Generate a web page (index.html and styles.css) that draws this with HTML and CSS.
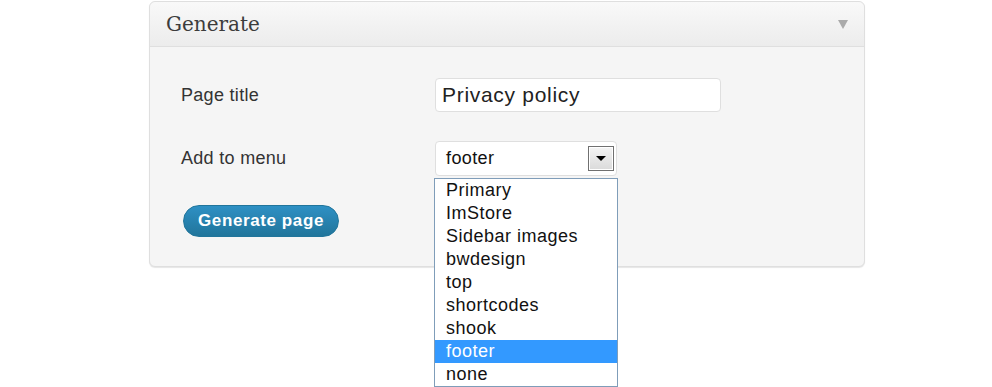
FILE: index.html
```html
<!DOCTYPE html>
<html lang="en">
<head>
  <meta charset="UTF-8" />
  <title>Generate page</title>
  <link rel="stylesheet" href="styles.css">
</head>
<body>

  <div class="postbox">
    <div class="postbox-head">
      <h3>Generate</h3>
      <span class="toggle"></span>
    </div>

    <div class="postbox-body">
      <div class="row">
        <label class="label">Page title</label>
        <div class="field text-field">Privacy policy</div>
      </div>

      <div class="row">
        <label class="label">Add to menu</label>
        <div class="select-wrap">
          <div class="field select-field">
            <span>footer</span>
            <span class="select-btn"><span class="caret"></span></span>
          </div>
          <!-- open option list -->
          <ul class="options">
            <li>Primary</li>
            <li>ImStore</li>
            <li>Sidebar images</li>
            <li>bwdesign</li>
            <li>top</li>
            <li>shortcodes</li>
            <li>shook</li>
            <li class="selected">footer</li>
            <li>none</li>
          </ul>
        </div>
      </div>

      <div class="row">
        <button class="button-primary">Generate page</button>
      </div>
    </div>
  </div>

</body>
</html>
```

FILE: styles.css
```css
html, body {
  min-height: 387px;
}
body {
  margin: 0;
  background: #fff;
  font-family: "Liberation Sans", Arial, sans-serif;
  color: #333;
}
.postbox {
  width: 714px;
  margin: 1px 0 0 149px;
  background: #f5f5f5;
  border: 1px solid #dfdfdf;
  border-radius: 6px;
  box-shadow: 0 1px 1px #e6e6e6;
}
.postbox-head {
  height: 44px;
  display: flex;
  align-items: center;
  justify-content: space-between;
  padding: 0 16px 0 16px;
  background: linear-gradient(#f9f9f9, #ececec);
  border-bottom: 1px solid #dfdfdf;
  border-radius: 6px 6px 0 0;
}
.postbox-head h3 {
  margin: 0;
  font-family: "DejaVu Serif", Georgia, serif;
  font-weight: normal;
  font-size: 20px;
  color: #3c3c3c;
}
.toggle {
  width: 0;
  height: 0;
  border-left: 5px solid transparent;
  border-right: 5px solid transparent;
  border-top: 9px solid #aaa;
}
.postbox-body {
  padding: 31px 0 29px 31px;
  display: flex;
  flex-direction: column;
  gap: 29px;
}
.row {
  display: flex;
  align-items: center;
}
.label {
  width: 254px;
  font-size: 18px;
  letter-spacing: 0.3px;
  color: #333;
}
.field {
  box-sizing: border-box;
  height: 34px;
  background: #fff;
  border: 1px solid #dfdfdf;
  border-radius: 4px;
  display: flex;
  align-items: center;
}
.text-field {
  width: 286px;
  padding-left: 6px;
  font-size: 21px;
  letter-spacing: 0.7px;
  color: #222;
}
.select-wrap {
  position: relative;
}
.select-field {
  width: 182px;
  height: 35px;
  padding: 0 2px 0 10px;
  justify-content: space-between;
  font-size: 18px;
  letter-spacing: 0.4px;
  color: #111;
}
.select-btn {
  box-sizing: border-box;
  width: 26px;
  height: 25px;
  border: 1px solid #707070;
  box-shadow: inset 0 0 0 1px #fff;
  background: linear-gradient(#f4f4f4, #dadada);
  display: flex;
  align-items: center;
  justify-content: center;
}
.caret {
  width: 0;
  height: 0;
  border-left: 5px solid transparent;
  border-right: 5px solid transparent;
  border-top: 5px solid #000;
}
.options {
  position: absolute;
  top: 37px;
  left: -1px;
  width: 182px;
  margin: 0;
  padding: 0;
  list-style: none;
  background: #fff;
  border: 1px solid #7f9db9;
  font-size: 18px;
  letter-spacing: 0.5px;
  color: #111;
}
.options li {
  height: 23px;
  line-height: 23px;
  padding-left: 11px;
}
.options li.selected {
  background: #3399ff;
  color: #fff;
}
.button-primary {
  margin-left: 2px;
  width: 156px;
  height: 32px;
  padding: 0;
  border: 1px solid #21759b;
  border-radius: 16px;
  background: linear-gradient(#2e90c4, #21759b);
  color: #fff;
  font-family: "Liberation Sans", Arial, sans-serif;
  font-weight: bold;
  font-size: 17px;
  letter-spacing: 0.6px;
  cursor: pointer;
}
```
